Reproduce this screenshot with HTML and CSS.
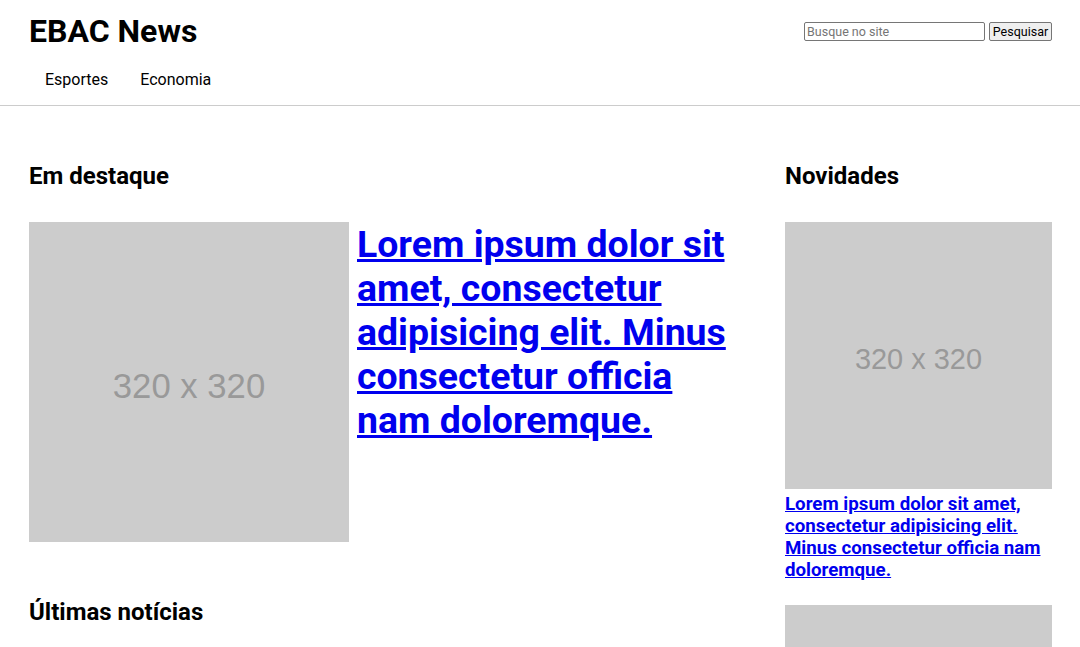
FILE: index.html
```html
<!DOCTYPE html>
<html lang="pt-BR">
<head>
<meta charset="utf-8">
<title>EBAC News</title>
<link rel="stylesheet" href="styles.css">
</head>
<body>
<header class="header">
  <div class="container">
    <div class="header-top">
      <h1 class="logo">EBAC News</h1>
      <form class="search">
        <input class="search-input" type="text" placeholder="Busque no site">
        <button class="search-button" type="button">Pesquisar</button>
      </form>
    </div>
    <nav class="menu">
      <a class="menu-link" href="#">Esportes</a>
      <a class="menu-link" href="#">Economia</a>
    </nav>
  </div>
</header>
<main class="container main">
  <div class="content">
    <section class="featured">
      <h2 class="section-title">Em destaque</h2>
      <div class="featured-item">
        <svg class="placeholder featured-img" viewBox="0 0 320 320"><rect width="320" height="320" fill="#cccccc"/><text x="160" y="176" text-anchor="middle" font-family="Liberation Sans, Arial, sans-serif" font-size="34.7" fill="#999999">320 x 320</text></svg>
        <a class="featured-title" href="#">Lorem ipsum dolor sit amet, consectetur adipisicing elit. Minus consectetur officia nam doloremque.</a>
      </div>
    </section>
    <section class="latest">
      <h2 class="section-title">Últimas notícias</h2>
    </section>
  </div>
  <aside class="sidebar">
    <h2 class="section-title">Novidades</h2>
    <div class="news-item">
      <svg class="placeholder" viewBox="0 0 320 320"><rect width="320" height="320" fill="#cccccc"/><text x="160" y="176" text-anchor="middle" font-family="Liberation Sans, Arial, sans-serif" font-size="34.7" fill="#999999">320 x 320</text></svg>
      <a class="news-title" href="#">Lorem ipsum dolor sit amet, consectetur adipisicing elit. Minus consectetur officia nam doloremque.</a>
    </div>
    <div class="news-item">
      <svg class="placeholder" viewBox="0 0 320 320"><rect width="320" height="320" fill="#cccccc"/><text x="160" y="176" text-anchor="middle" font-family="Liberation Sans, Arial, sans-serif" font-size="34.7" fill="#999999">320 x 320</text></svg>
      <a class="news-title" href="#">Lorem ipsum dolor sit amet, consectetur adipisicing elit. Minus consectetur officia nam doloremque.</a>
    </div>
  </aside>
</main>
</body>
</html>
```

FILE: styles.css
```css
* {
  box-sizing: border-box;
}

body {
  margin: 0;
  font-family: Roboto, "Liberation Sans", Arial, sans-serif;
  color: #000;
  background: #fff;
}

.container {
  padding: 0 28px 0 29px;
}

.header {
  border-bottom: 1px solid #cccccc;
}

.header-top {
  display: flex;
  justify-content: space-between;
  align-items: center;
  padding-top: 12px;
}

.logo {
  margin: 0;
  font-size: 32px;
  line-height: 38px;
  font-weight: 700;
}

.search {
  display: flex;
  gap: 4px;
  margin: 0;
}

.search-input {
  width: 181px;
  height: 19px;
  padding: 0 2px;
  border: 1px solid #767676;
  border-radius: 2px;
  font-family: Roboto, Arial, sans-serif;
  font-size: 12.5px;
}

.search-input::placeholder {
  color: #757575;
}

.search-button {
  width: 63px;
  height: 19px;
  padding: 0;
  border: 1px solid #767676;
  border-radius: 2px;
  background: #efefef;
  font-family: Roboto, Arial, sans-serif;
  font-size: 12.5px;
  color: #000;
}

.menu {
  display: flex;
  padding: 20px 0 16px;
}

.menu-link {
  padding: 0 16px;
  font-size: 16px;
  line-height: 19px;
  color: #000;
  text-decoration: none;
}

.main {
  display: grid;
  grid-template-columns: 1fr 267px;
  column-gap: 32px;
  padding-top: 56px;
}

.section-title {
  margin: 0 0 32px;
  font-size: 24px;
  line-height: 28px;
  font-weight: 700;
}

.featured-item {
  display: flex;
  gap: 8px;
  align-items: flex-start;
}

.placeholder {
  display: block;
  width: 100%;
  height: auto;
}

.featured-img {
  width: 320px;
  flex: none;
}

.featured-title {
  display: block;
  margin-top: 0;
  font-size: 37.44px;
  line-height: normal;
  font-weight: 700;
  color: #0000ee;
}

.latest {
  margin-top: 56px;
}

.news-item {
  margin-bottom: 24px;
}

.news-title {
  display: block;
  margin-top: 4px;
  font-size: 18.72px;
  line-height: normal;
  font-weight: 700;
  color: #0000ee;
}
```
